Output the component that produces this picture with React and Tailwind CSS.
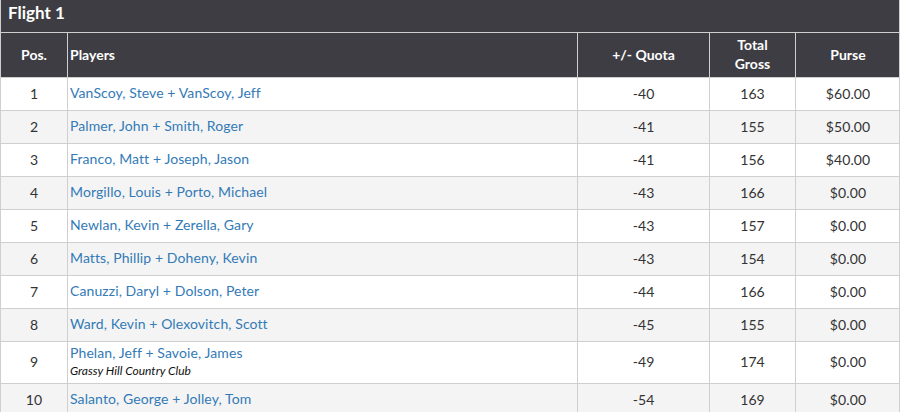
import React from "react";

const rows = [
  ["1", "VanScoy, Steve + VanScoy, Jeff", "-40", "163", "$60.00"],
  ["2", "Palmer, John + Smith, Roger", "-41", "155", "$50.00"],
  ["3", "Franco, Matt + Joseph, Jason", "-41", "156", "$40.00"],
  ["4", "Morgillo, Louis + Porto, Michael", "-43", "166", "$0.00"],
  ["5", "Newlan, Kevin + Zerella, Gary", "-43", "157", "$0.00"],
  ["6", "Matts, Phillip + Doheny, Kevin", "-43", "154", "$0.00"],
  ["7", "Canuzzi, Daryl + Dolson, Peter", "-44", "166", "$0.00"],
  ["8", "Ward, Kevin + Olexovitch, Scott", "-45", "155", "$0.00"],
  ["9", "Phelan, Jeff + Savoie, James", "-49", "174", "$0.00", "Grassy Hill Country Club"],
  ["10", "Salanto, George + Jolley, Tom", "-54", "169", "$0.00"],
];

const cols = "grid grid-cols-[67px_510px_132px_86px_104px]";

export default function App() {
  return (
    <div className="w-[900px] h-[412px] overflow-hidden bg-white font-['Lato',sans-serif] text-[14px] tracking-[0.1px] text-[#333]">
      <div className="border-l border-r border-[#cfcfcf]">
        <div className="h-[33px] bg-[#3e3d43] border-b border-[#cfcfcf] flex items-center pl-[7px] pb-[7px] text-white font-bold text-[17px] tracking-[0px]">
          Flight 1
        </div>
        <div className={`${cols} h-[45px] bg-[#3e3d43] text-white font-bold text-[14px] tracking-[0px] border-b border-[#cfcfcf]`}>
          <div className="border-r border-[#cfcfcf] flex items-center justify-center pb-[2px]">Pos.</div>
          <div className="border-r border-[#cfcfcf] flex items-center pl-[2px] pb-[2px]">Players</div>
          <div className="border-r border-[#cfcfcf] flex items-center justify-center pb-[2px]">+/- Quota</div>
          <div className="border-r border-[#cfcfcf] flex items-center justify-center text-center leading-[19px] pb-[2px]">
            Total<br />Gross
          </div>
          <div className="flex items-center justify-center pb-[2px]">Purse</div>
        </div>
        {rows.map((r, i) => (
          <div
            key={r[0]}
            className={`${cols} border-b border-[#cfcfcf] ${r[5] ? "h-[42px]" : "h-[33px]"} ${i % 2 === 1 ? "bg-[#f4f4f4]" : "bg-white"}`}
          >
            <div className="border-r border-[#cfcfcf] flex items-center justify-center pb-[2px]">{r[0]}</div>
            <div className="border-r border-[#cfcfcf] flex flex-col justify-center pl-[2px] pb-[2px]">
              <span className="text-[#337ab7] leading-[18px]">{r[1]}</span>
              {r[5] && <span className="italic text-[12px] text-[#111] leading-[18px] tracking-[0px]">{r[5]}</span>}
            </div>
            <div className="border-r border-[#cfcfcf] flex items-center justify-center pb-[2px]">{r[2]}</div>
            <div className="border-r border-[#cfcfcf] flex items-center justify-center pb-[2px]">{r[3]}</div>
            <div className="flex items-center justify-center pb-[2px]">{r[4]}</div>
          </div>
        ))}
      </div>
    </div>
  );
}
